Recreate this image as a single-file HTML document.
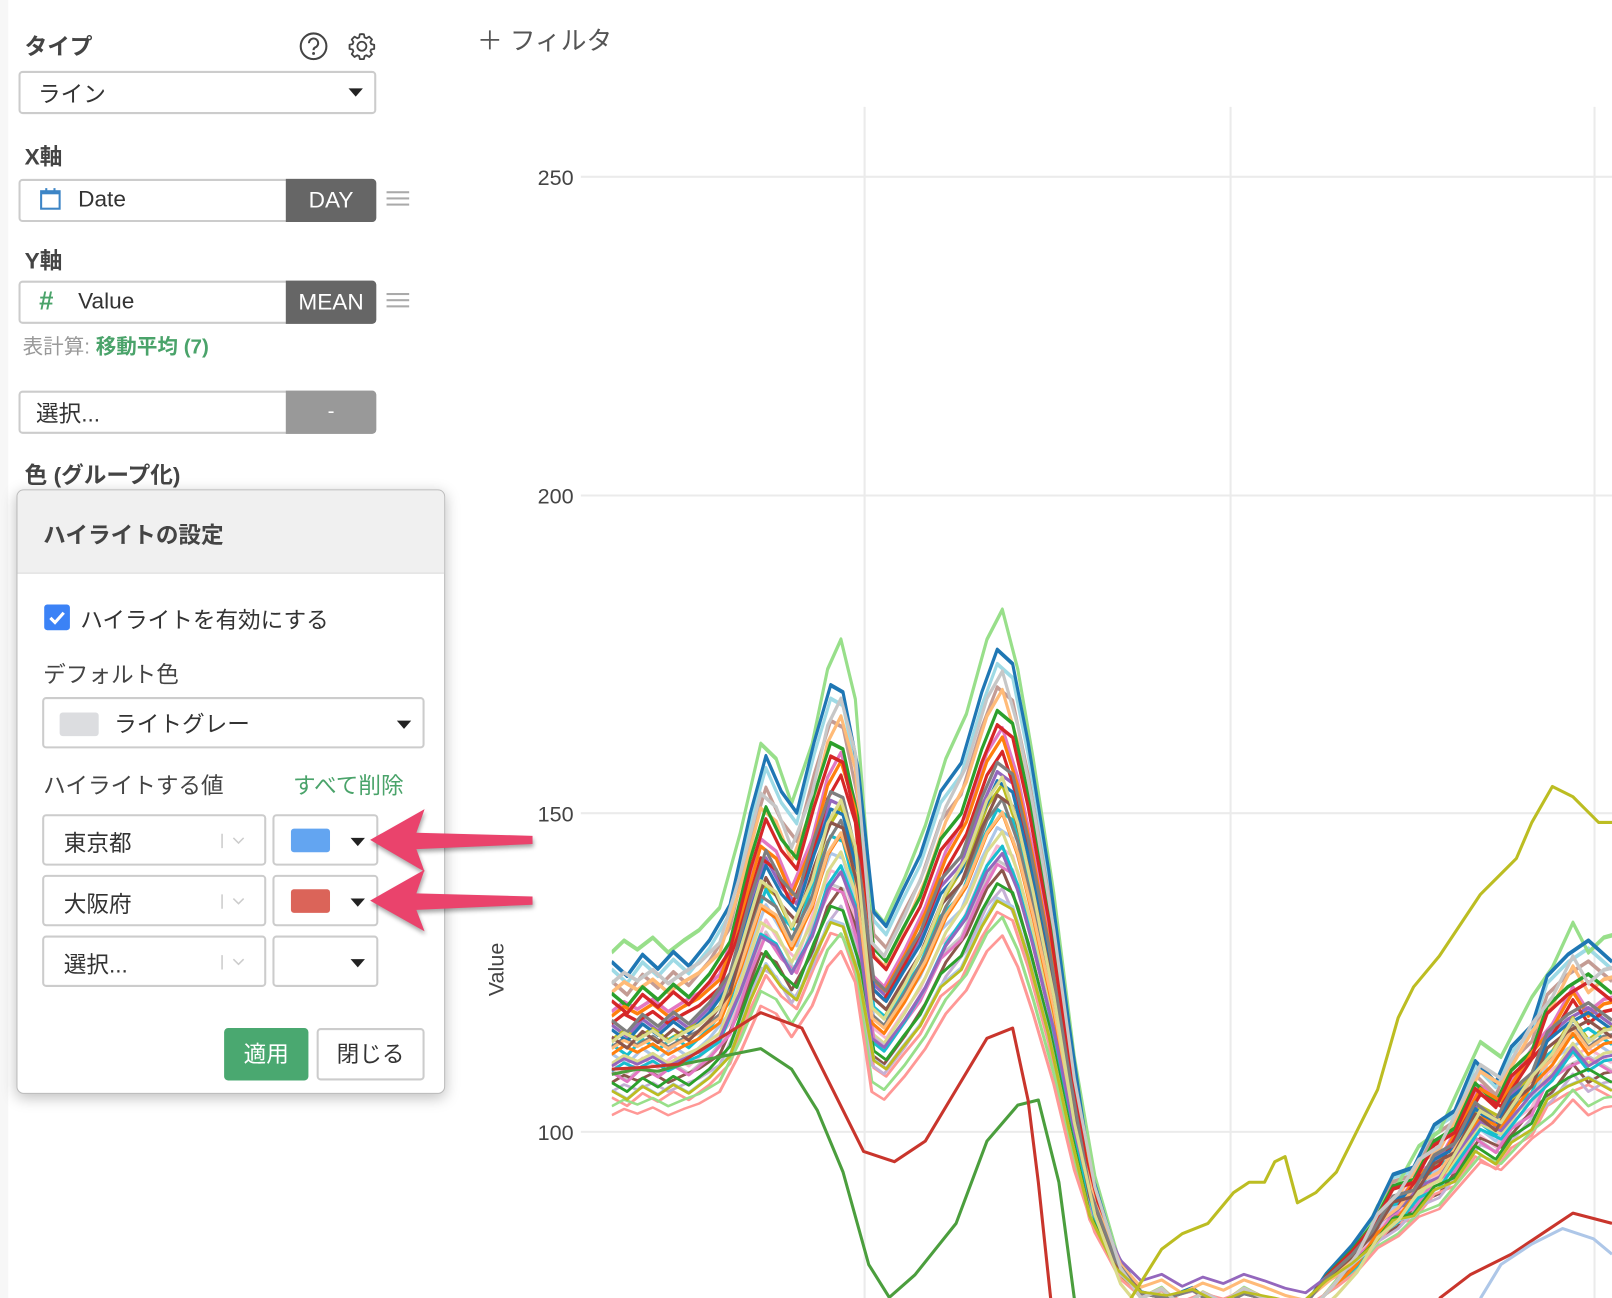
<!DOCTYPE html>
<html><head><meta charset="utf-8">
<style>
*{box-sizing:border-box;margin:0;padding:0}
html,body{width:1612px;height:1298px;overflow:hidden;background:#fff}
body{font-family:"Liberation Sans","Noto Sans CJK JP",sans-serif;color:#333}
#w{position:absolute;left:0;top:0;width:1568px;height:1263px;transform:scale(1.02806);transform-origin:0 0}
.a{position:absolute}
.lbl{font-size:22px;font-weight:bold;color:#444}
.box{position:absolute;border:2px solid #ccc;border-radius:4px;background:#fff}
.pill{position:absolute;background:#666;color:#fff;font-size:22px;text-align:center;border-radius:0 4px 4px 0}
.ham{position:absolute;width:22px;height:14px;border-top:2px solid #aaa;border-bottom:2px solid #aaa}
.ham:after{content:"";position:absolute;left:0;right:0;top:4px;border-top:2px solid #aaa}
.tri{position:absolute;width:0;height:0;border-left:7px solid transparent;border-right:7px solid transparent;border-top:8px solid #222}
.t20{font-size:21px;color:#333}
</style></head><body><div id="w">
<div class="a" style="left:0;top:0;width:8px;height:1263px;background:#f7f7f7"></div>

<div class="a lbl" style="left:24px;top:28px">タイプ</div>
<svg class="a" style="left:290px;top:30px" width="30" height="30" viewBox="0 0 30 30"><circle cx="15" cy="15" r="12.5" fill="none" stroke="#444" stroke-width="2"/><path d="M10.5 12a4.5 4.5 0 1 1 6 4.2c-1.2.5-1.5 1.3-1.5 2.6" fill="none" stroke="#444" stroke-width="2"/><circle cx="15" cy="22" r="1.4" fill="#444"/></svg>
<svg class="a" style="left:337px;top:30px" width="30" height="30" viewBox="0 0 24 24"><path d="M12 2.5l1.6.2.5 2.4 1.5.7 2.1-1.3 2.2 2.2-1.3 2.1.6 1.5 2.4.5v3.2l-2.4.5-.6 1.5 1.3 2.1-2.2 2.2-2.1-1.3-1.5.6-.5 2.4h-3.2l-.5-2.4-1.5-.6-2.1 1.3-2.2-2.2 1.3-2.1-.6-1.5-2.4-.5v-3.2l2.4-.5.6-1.5-1.3-2.1 2.2-2.2 2.1 1.3 1.5-.7.5-2.4z" fill="none" stroke="#444" stroke-width="1.4" stroke-linejoin="round"/><circle cx="12" cy="12" r="3.5" fill="none" stroke="#444" stroke-width="1.4"/></svg>
<div class="box" style="left:18px;top:69px;width:348px;height:42px"></div>
<div class="a t20" style="left:37px;top:74px;font-size:22px">ライン</div>
<div class="tri" style="left:339px;top:86px"></div>

<div class="a lbl" style="left:24px;top:135px">X軸</div>
<div class="box" style="left:18px;top:174px;width:348px;height:42px"></div>
<svg class="a" style="left:38px;top:182px" width="22" height="24" viewBox="0 0 22 24"><rect x="2" y="4" width="18" height="17" fill="none" stroke="#3d85c6" stroke-width="2"/><rect x="2" y="4" width="18" height="3" fill="#3d85c6"/><rect x="6" y="1" width="2" height="5" fill="#3d85c6"/><rect x="14" y="1" width="2" height="5" fill="#3d85c6"/></svg>
<div class="a" style="left:76px;top:181px;font-size:22px;color:#333">Date</div>
<div class="pill" style="left:278px;top:174px;width:88px;height:42px;line-height:42px">DAY</div>
<div class="ham" style="left:376px;top:186px"></div>

<div class="a lbl" style="left:24px;top:236px">Y軸</div>
<div class="box" style="left:18px;top:273px;width:348px;height:42px"></div>
<div class="a" style="left:38px;top:279px;font-size:25px;font-weight:bold;color:#4aa36a">#</div>
<div class="a" style="left:76px;top:280px;font-size:22px;color:#333">Value</div>
<div class="pill" style="left:278px;top:273px;width:88px;height:42px;line-height:42px">MEAN</div>
<div class="ham" style="left:376px;top:285px"></div>
<div class="a" style="left:22px;top:321px;font-size:20px;color:#999">表計算: <b style="color:#4aa36a">移動平均 (7)</b></div>

<div class="box" style="left:18px;top:380px;width:348px;height:42px"></div>
<div class="a t20" style="left:35px;top:385px;font-size:22px">選択...</div>
<div class="a" style="left:278px;top:380px;width:88px;height:42px;background:#999;border-radius:0 4px 4px 0;color:#fff;text-align:center;line-height:40px;font-size:20px">-</div>

<div class="a lbl" style="left:24px;top:445px">色 (グループ化)</div>

<!-- popup -->
<div class="a" style="left:16px;top:476px;width:417px;height:588px;border:1px solid #bbb;border-radius:7px;background:#fff;box-shadow:0 4px 14px rgba(0,0,0,.25);overflow:hidden">
 <div class="a" style="left:0;top:0;width:417px;height:81px;background:#f0f0f0;border-bottom:1px solid #ddd"></div>
 <div class="a" style="left:25px;top:26px;font-size:22px;font-weight:bold;color:#444">ハイライトの設定</div>
 <div class="a" style="left:26px;top:111px;width:25px;height:25px;background:#3b82f6;border-radius:3px"><svg width="25" height="25"><path d="M6 13l4.5 4.5L19 8" fill="none" stroke="#fff" stroke-width="3"/></svg></div>
 <div class="a t20" style="left:61px;top:109px;font-size:22px">ハイライトを有効にする</div>
 <div class="a t20" style="left:25px;top:162px;color:#444;font-size:22px">デフォルト色</div>
 <div class="box" style="left:24px;top:201px;width:372px;height:50px"></div>
 <div class="a" style="left:41px;top:216px;width:38px;height:23px;background:#dcdde0;border-radius:3px"></div>
 <div class="a t20" style="left:94px;top:210px;font-size:22px">ライトグレー</div>
 <div class="tri" style="left:369px;top:224px"></div>
 <div class="a t20" style="left:25px;top:270px;color:#444;font-size:22px">ハイライトする値</div>
 <div class="a t20" style="left:268px;top:270px;color:#4aa36a;font-size:22px">すべて削除</div>

 <div class="box" style="left:24px;top:315px;width:218px;height:50px"></div>
 <div class="a t20" style="left:45px;top:326px;font-size:22px">東京都</div>
 <div class="box" style="left:248px;top:315px;width:103px;height:50px"></div>
 <div class="a" style="left:266px;top:329px;width:38px;height:23px;background:#63a5f1;border-radius:3px"></div>
 <div class="tri" style="left:324px;top:338px"></div>

 <div class="box" style="left:24px;top:374px;width:218px;height:50px"></div>
 <div class="a t20" style="left:45px;top:385px;font-size:22px">大阪府</div>
 <div class="box" style="left:248px;top:374px;width:103px;height:50px"></div>
 <div class="a" style="left:266px;top:388px;width:38px;height:23px;background:#db6459;border-radius:3px"></div>
 <div class="tri" style="left:324px;top:397px"></div>

 <div class="box" style="left:24px;top:433px;width:218px;height:50px"></div>
 <div class="a t20" style="left:45px;top:444px;font-size:22px">選択...</div>
 <div class="box" style="left:248px;top:433px;width:103px;height:50px"></div>
 <div class="tri" style="left:324px;top:456px"></div>
 <svg class="a" style="left:195px;top:320px" width="40" height="160"><g stroke="#ccc" stroke-width="1.5" fill="none"><path d="M4 14v14M4 73v14M4 132v14"/><path d="M15 18l5 5 5-5M15 77l5 5 5-5M15 136l5 5 5-5"/></g></svg>

 <div class="a" style="left:201px;top:523px;width:82px;height:51px;background:#4aa870;border-radius:4px;color:#fff;font-size:22px;text-align:center;line-height:51px">適用</div>
 <div class="box" style="left:291px;top:523px;width:105px;height:51px;text-align:center;line-height:47px;font-size:22px;color:#333">閉じる</div>
</div>

<!-- filter -->
<div class="a" style="left:464px;top:20px;font-size:25px;color:#555">＋ フィルタ</div>

<!-- chart -->
<svg class="a" style="left:0;top:0" width="1568" height="1263" viewBox="0 0 1568 1263">
<defs>
<clipPath id="c"><rect x="595" y="100" width="973" height="1163"/></clipPath>
<path id="b" d="M595,1030 L607,1022 L620,1028 L635,1020 L650,1030 L665,1022 L680,1015 L700,1000 L720,950 L740,890 L755,900 L770,930 L790,890 L805,840 L818,820 L832,860 L848,1000 L860,1010 L880,980 L900,945 L920,900 L940,870 L960,820 L975,800 L990,840 L1005,900 L1025,990 L1045,1100 L1065,1180 L1090,1240 L1110,1262 L1130,1255 L1150,1268 L1170,1258 L1190,1265 L1210,1255 L1230,1262 L1250,1270 L1270,1275 L1300,1250 L1320,1230 L1340,1200 L1360,1185 L1380,1160 L1400,1150 L1420,1120 L1440,1090 L1460,1100 L1475,1080 L1490,1060 L1510,1040 L1530,1010 L1545,1030 L1560,1020 L1612,1010"/>
<path id="d" d="M595,1025 L610,1035 L625,1020 L640,1030 L655,1018 L670,1028 L690,1010 L710,985 L730,920 L745,880 L760,905 L775,920 L792,870 L808,830 L820,835 L835,890 L850,990 L862,1000 L878,975 L895,950 L915,905 L935,885 L955,835 L970,805 L985,815 L1000,870 L1020,960 L1040,1070 L1060,1170 L1085,1230 L1110,1258 L1135,1262 L1160,1255 L1185,1270 L1210,1258 L1240,1265 L1265,1272 L1290,1245 L1315,1225 L1335,1205 L1355,1175 L1375,1170 L1395,1140 L1415,1130 L1435,1095 L1455,1110 L1470,1085 L1490,1070 L1505,1035 L1525,1020 L1545,1010 L1568,1025"/>
</defs>
<g stroke="#ebebeb" stroke-width="2" fill="none">
<path d="M841,104V1263M1197,104V1263M1551,104V1263"/>
<path d="M565,172H1568M565,482H1568M565,791H1568M565,1101H1568"/>
</g>
<g font-size="21" fill="#444" text-anchor="end" font-family="Liberation Sans,sans-serif">
<text x="558" y="180">250</text><text x="558" y="490">200</text><text x="558" y="799">150</text><text x="558" y="1109">100</text>
</g>
<text transform="translate(490,943) rotate(-90)" font-size="21" fill="#444" text-anchor="middle" font-family="Liberation Sans,sans-serif">Value</text>
<g clip-path="url(#c)" fill="none" stroke-width="3" stroke-linejoin="round">
<use href="#d" stroke="#9edae5" transform="matrix(1,0,0,1.35,0,-441)"/>
<use href="#b" stroke="#e377c2" transform="matrix(1,0,0,1.2,0,-252)"/>
<use href="#d" stroke="#c49c94" transform="matrix(1,0,0,1.3,0,-378)"/>
<use href="#b" stroke="#98df8a" transform="matrix(1,0,0,1.45,0,-567)"/>
<use href="#d" stroke="#1f77b4" transform="matrix(1,0,0,1.38,0,-479)"/>
<use href="#b" stroke="#ffbb78" transform="matrix(1,0,0,1.28,0,-353)"/>
<use href="#d" stroke="#2ca02c" transform="matrix(1,0,0,1.25,0,-315)"/>
<use href="#b" stroke="#ff7f0e" transform="matrix(1,0,0,1.18,0,-227)"/>
<use href="#d" stroke="#9467bd" transform="matrix(1,0,0,1.12,0,-151)"/>
<use href="#b" stroke="#bcbd22" transform="matrix(1,0,0,1.08,0,-101)"/>
<use href="#d" stroke="#17becf" transform="matrix(1,0,0,1.04,0,-50)"/>
<use href="#b" stroke="#d62728" transform="matrix(1,0,0,1.15,0,-189)"/>
<use href="#d" stroke="#aec7e8" transform="matrix(1,0,0,1.0,0,0)"/>
<use href="#b" stroke="#7f7f7f" transform="matrix(1,0,0,1.05,0,-63)"/>
<use href="#d" stroke="#f7b6d2" transform="matrix(1,0,0,0.96,0,50)"/>
<use href="#b" stroke="#dbdb8d" transform="matrix(1,0,0,0.98,0,25)"/>
<use href="#d" stroke="#c7c7c7" transform="matrix(1,0,0,0.93,0,88)"/>
<use href="#b" stroke="#8c564b" transform="matrix(1,0,0,0.9,0,126)"/>
<use href="#d" stroke="#ff9896" transform="matrix(1,0,0,0.82,0,227)"/>
<use href="#b" stroke="#c5b0d5" transform="matrix(1,0,0,0.86,0,176)"/>
<use href="#d" stroke="#e377c2" transform="matrix(1,0,0,0.92,0,100)"/>
<use href="#b" stroke="#17becf" transform="matrix(1,0,0,0.95,0,63)"/>
<use href="#d" stroke="#1f77b4" transform="matrix(1,0,0,1.1,0,-126)"/>
<use href="#b" stroke="#ff7f0e" transform="matrix(1,0,0,1.02,0,-25)"/>
<use href="#d" stroke="#2ca02c" transform="matrix(1,0,0,0.88,0,151)"/>
<use href="#b" stroke="#98df8a" transform="matrix(1,0,0,0.8,0,252)"/>
<use href="#d" stroke="#d62728" transform="matrix(1,0,0,1.22,0,-277)"/>
<use href="#b" stroke="#9467bd" transform="matrix(1,0,0,0.9,0,110)"/>
<use href="#d" stroke="#aec7e8" transform="matrix(1,0,0,0.85,0,189)"/>
<use href="#b" stroke="#ffbb78" transform="matrix(1,0,0,1.0,0,-10)"/>
<use href="#d" stroke="#8c564b" transform="matrix(1,0,0,1.07,0,-88)"/>
<use href="#b" stroke="#ff9896" transform="matrix(1,0,0,0.76,0,302)"/>
<use href="#d" stroke="#7f7f7f" transform="matrix(1,0,0,1.14,0,-176)"/>
<use href="#b" stroke="#c7c7c7" transform="matrix(1,0,0,1.32,0,-403)"/>
<use href="#d" stroke="#bcbd22" transform="matrix(1,0,0,0.84,0,200)"/>
<use href="#b" stroke="#dbdb8d" transform="matrix(1,0,0,1.12,0,-140)"/>
<polyline stroke="#bcbd22" points="1100,1263 1130,1215 1150,1200 1175,1190 1200,1160 1215,1150 1230,1150 1240,1130 1250,1125 1262,1170 1280,1160 1300,1140 1320,1100 1340,1060 1360,990 1375,960 1400,930 1420,900 1440,870 1460,850 1475,835 1490,800 1510,765 1530,775 1545,790 1555,800 1568,800"/>
<polyline stroke="#4b9e3d" points="595,1045 620,1040 640,1042 665,1035 690,1030 715,1025 740,1020 770,1040 795,1080 820,1140 845,1230 865,1262 890,1240 910,1215 930,1190 960,1110 990,1075 1010,1070 1030,1150 1045,1263"/>
<polyline stroke="#c9352c" points="595,1040 630,1038 660,1035 700,1010 740,985 780,1000 810,1060 840,1120 870,1130 900,1110 930,1060 960,1010 985,1000 1000,1070 1010,1150 1022,1263"/>
<polyline stroke="#c9352c" points="1400,1263 1430,1240 1470,1220 1500,1200 1530,1180 1568,1190"/>
<polyline stroke="#aec7e8" points="1440,1263 1460,1230 1490,1210 1520,1195 1550,1205 1568,1220"/>
</g>
<!-- arrows -->
<g fill="#ea436c" style="filter:drop-shadow(1px 3px 2px rgba(0,0,0,.35))">
<path d="M360,817 L413,787 L405,810 L518,813 L518,821 L405,826 L413,848 Z"/>
<path d="M360,876 L413,846 L405,869 L518,872 L518,880 L405,885 L413,906 Z"/>
</g>
</svg>
</div></body></html>
